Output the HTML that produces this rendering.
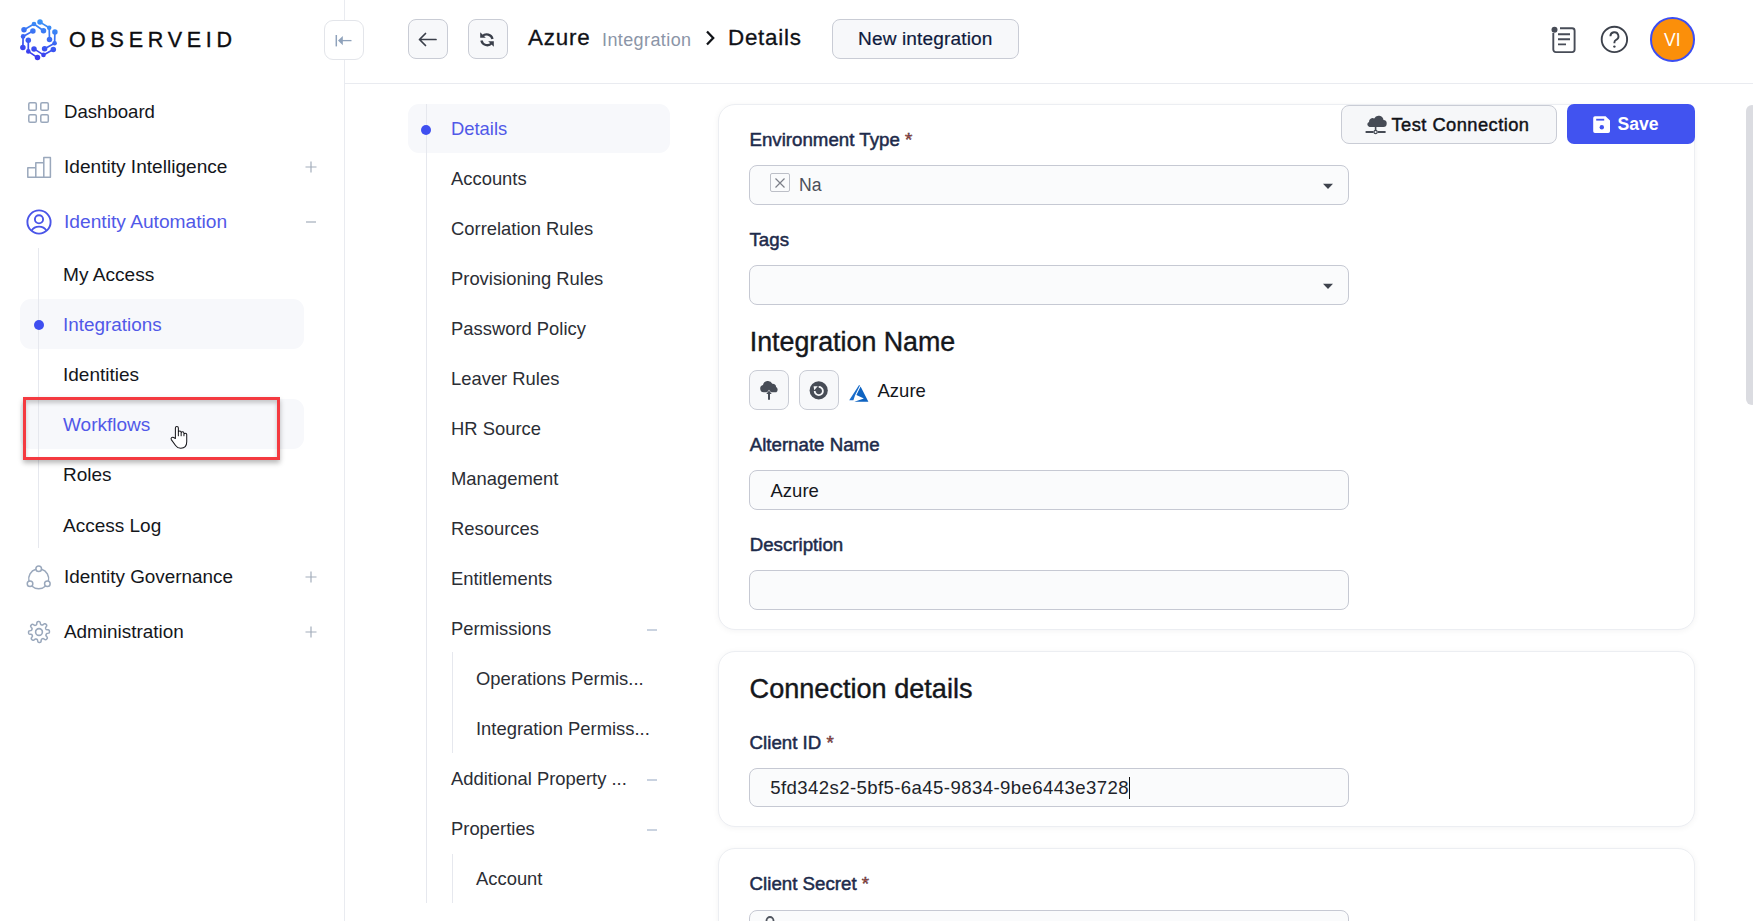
<!DOCTYPE html>
<html><head><meta charset="utf-8"><style>
html,body{margin:0;padding:0;width:1753px;height:921px;overflow:hidden;background:#fff;font-family:"Liberation Sans",sans-serif}
.t{position:absolute;white-space:nowrap}
.r{position:absolute;display:block}
</style></head><body>
<div class="r" style="left:344px;top:0px;width:1px;height:921px;background:#e9ebf0"></div>
<div class="r" style="left:344px;top:83px;width:1409px;height:1px;background:#e9ebf0"></div>
<svg class="r" style="left:18px;top:18px" width="42" height="44" viewBox="0 0 42 44"><defs><linearGradient id="lg" gradientUnits="userSpaceOnUse" x1="30" y1="2" x2="18" y2="42"><stop offset="0" stop-color="#3a9af7"/><stop offset="1" stop-color="#3b33ee"/></linearGradient></defs><g fill="url(#lg)" stroke="url(#lg)"><path d="M22.0 4.1 L31.2 9.8 L31.5 21.4" fill="none" stroke-width="1.7" stroke-linejoin="round"/><circle cx="22.0" cy="4.1" r="2.75" stroke="none"/><circle cx="31.2" cy="9.8" r="2.3" stroke="none"/><circle cx="31.5" cy="21.4" r="2.75" stroke="none"/><path d="M6.0 11.7 L16.0 6.0 L25.5 12.7" fill="none" stroke-width="1.7" stroke-linejoin="round"/><circle cx="6.0" cy="11.7" r="2.75" stroke="none"/><circle cx="16.0" cy="6.0" r="2.3" stroke="none"/><circle cx="25.5" cy="12.7" r="2.75" stroke="none"/><path d="M14.9 13.0 L5.1 18.4 L4.9 29.6" fill="none" stroke-width="1.7" stroke-linejoin="round"/><circle cx="14.9" cy="13.0" r="2.75" stroke="none"/><circle cx="5.1" cy="18.4" r="2.3" stroke="none"/><circle cx="4.9" cy="29.6" r="2.75" stroke="none"/><path d="M10.3 22.2 L10.3 33.4 L19.5 39.6" fill="none" stroke-width="1.7" stroke-linejoin="round"/><circle cx="10.3" cy="22.2" r="2.75" stroke="none"/><circle cx="10.3" cy="33.4" r="2.3" stroke="none"/><circle cx="19.5" cy="39.6" r="2.75" stroke="none"/><path d="M16.0 30.9 L25.5 36.9 L35.3 31.5" fill="none" stroke-width="1.7" stroke-linejoin="round"/><circle cx="16.0" cy="30.9" r="2.75" stroke="none"/><circle cx="25.5" cy="36.9" r="2.3" stroke="none"/><circle cx="35.3" cy="31.5" r="2.75" stroke="none"/><path d="M36.9 14.1 L36.6 25.2 L26.6 30.7" fill="none" stroke-width="1.7" stroke-linejoin="round"/><circle cx="36.9" cy="14.1" r="2.75" stroke="none"/><circle cx="36.6" cy="25.2" r="2.3" stroke="none"/><circle cx="26.6" cy="30.7" r="2.75" stroke="none"/></g></svg>
<div class="t " style="left:69px;top:26.75px;font-size:21.5px;line-height:27px;color:#0d0d0f;letter-spacing:4.75px;-webkit-text-stroke:0.35px #0d0d0f;">OBSERVEID</div>
<div class="r" style="left:324px;top:20px;width:40px;height:40px;box-sizing:border-box;border:1px solid #e3e5ea;border-radius:9px;background:#fff"></div>
<svg class="r" style="left:334px;top:33px" width="20" height="14" viewBox="0 0 20 14"><path d="M2.3 2v11.4" stroke="#8fa2bb" stroke-width="1.5"/><path d="M4 7.6L8.8 3v9.2z" fill="#8fa2bb"/><path d="M8 7.6h9.5" stroke="#8fa2bb" stroke-width="1.3"/></svg>
<svg class="r" style="left:26px;top:100px" width="26" height="26" viewBox="0 0 26 26"><rect x="2.8" y="2.8" width="7.5" height="7.5" rx="1.3" fill="none" stroke="#9aa8bc" stroke-width="1.5"/><rect x="14.8" y="2.8" width="7.5" height="7.5" rx="1.3" fill="none" stroke="#9aa8bc" stroke-width="1.5"/><rect x="2.8" y="14.8" width="7.5" height="7.5" rx="1.3" fill="none" stroke="#9aa8bc" stroke-width="1.5"/><rect x="14.8" y="14.8" width="7.5" height="7.5" rx="1.3" fill="none" stroke="#9aa8bc" stroke-width="1.5"/></svg>
<div class="t " style="left:64px;top:100.06px;font-size:18.6px;line-height:23px;color:#14161b;">Dashboard</div>
<svg class="r" style="left:26px;top:155px" width="26" height="24" viewBox="0 0 26 24"><path d="M1.8 22.2V12.8h8v9.4zM9.8 22.2V7.8h8v14.4zM17.8 22.2V2.5h6.6v19.7z" fill="none" stroke="#9aa8bc" stroke-width="1.5" stroke-linejoin="round"/></svg>
<div class="t " style="left:64px;top:155.38px;font-size:19.1px;line-height:24px;color:#14161b;">Identity Intelligence</div>
<svg class="r" style="left:304px;top:159.5px" width="14" height="14" viewBox="0 0 14 14"><path d="M7 1.5v11M1.5 7h11" stroke="#a3adbb" stroke-width="1.2"/></svg>
<svg class="r" style="left:25px;top:208px" width="28" height="28" viewBox="0 0 28 28"><circle cx="14" cy="14" r="11.6" fill="none" stroke="#4a55e8" stroke-width="1.9"/><circle cx="14" cy="11.3" r="4.1" fill="none" stroke="#4a55e8" stroke-width="1.9"/><path d="M6.6 22.6c1.6-2.8 4.4-4 7.4-4s5.8 1.2 7.4 4" fill="none" stroke="#4a55e8" stroke-width="1.9"/></svg>
<div class="t " style="left:64px;top:209.55px;font-size:19.2px;line-height:24px;color:#5159e8;">Identity Automation</div>
<svg class="r" style="left:305px;top:218.5px" width="12" height="6" viewBox="0 0 12 6"><path d="M1 3h10" stroke="#a3adbb" stroke-width="1.2"/></svg>
<div class="r" style="left:38px;top:248px;width:1px;height:300px;background:#e6e8ee"></div>
<div class="t " style="left:63px;top:263.18px;font-size:19.1px;line-height:24px;color:#14161b;">My Access</div>
<div class="r" style="left:20px;top:299px;width:284px;height:50px;background:#f7f8fb;border-radius:11px"></div>
<div class="r" style="left:38px;top:248px;width:1px;height:300px;background:#e6e8ee"></div>
<div class="r" style="left:33.7px;top:320px;width:10px;height:10px;background:#3f4ff0;border-radius:50%"></div>
<div class="t " style="left:63px;top:313.45px;font-size:18.9px;line-height:24px;color:#5159e8;">Integrations</div>
<div class="t " style="left:63px;top:363.22px;font-size:19px;line-height:24px;color:#14161b;">Identities</div>
<div class="r" style="left:20px;top:399px;width:284px;height:50px;background:#f7f8fb;border-radius:11px"></div>
<div class="r" style="left:38px;top:399px;width:1px;height:50px;background:#e6e8ee"></div>
<div class="t " style="left:63px;top:413.32px;font-size:19px;line-height:24px;color:#5159e8;">Workflows</div>
<div class="t " style="left:63px;top:463.32px;font-size:19px;line-height:24px;color:#14161b;">Roles</div>
<div class="t " style="left:63px;top:513.62px;font-size:19px;line-height:24px;color:#14161b;">Access Log</div>
<svg class="r" style="left:24px;top:565px" width="30" height="28" viewBox="0 0 30 28"><circle cx="14.70" cy="3.80" r="2.8" fill="none" stroke="#9aa8bc" stroke-width="1.5"/><circle cx="6.04" cy="18.80" r="2.8" fill="none" stroke="#9aa8bc" stroke-width="1.5"/><circle cx="23.36" cy="18.80" r="2.8" fill="none" stroke="#9aa8bc" stroke-width="1.5"/><path d="M17.47 4.19A10 10 0 0 1 24.41 16.20M21.63 21.00A10 10 0 0 1 7.77 21.00M4.99 16.20A10 10 0 0 1 11.93 4.19" fill="none" stroke="#9aa8bc" stroke-width="1.5"/></svg>
<div class="t " style="left:64px;top:564.75px;font-size:18.9px;line-height:24px;color:#14161b;">Identity Governance</div>
<svg class="r" style="left:304px;top:570px" width="14" height="14" viewBox="0 0 14 14"><path d="M7 1.5v11M1.5 7h11" stroke="#a3adbb" stroke-width="1.2"/></svg>
<svg class="r" style="left:27px;top:618px" width="24" height="28" viewBox="0 0 24 28"><path d="M22.44 14.00 L22.38 14.41 L22.18 14.80 L21.64 15.14 L20.64 15.37 L19.83 15.56 L19.46 15.79 L19.30 16.06 L19.18 16.33 L19.08 16.61 L18.99 16.89 L18.92 17.19 L18.94 17.53 L19.24 18.05 L19.89 18.84 L20.33 19.57 L20.35 20.07 L20.18 20.45 L19.94 20.78 L19.67 21.09 L19.38 21.38 L19.05 21.63 L18.63 21.77 L18.01 21.62 L17.14 21.08 L16.43 20.63 L16.01 20.54 L15.70 20.62 L15.43 20.73 L15.16 20.86 L14.89 20.99 L14.64 21.14 L14.41 21.40 L14.25 21.99 L14.16 23.00 L13.95 23.83 L13.62 24.20 L13.22 24.35 L12.82 24.41 L12.41 24.44 L12.00 24.44 L11.59 24.38 L11.20 24.18 L10.86 23.64 L10.63 22.64 L10.44 21.83 L10.21 21.46 L9.94 21.30 L9.67 21.18 L9.39 21.08 L9.11 20.99 L8.81 20.92 L8.47 20.94 L7.95 21.24 L7.16 21.89 L6.43 22.33 L5.93 22.35 L5.55 22.18 L5.22 21.94 L4.91 21.67 L4.62 21.38 L4.37 21.05 L4.23 20.63 L4.38 20.01 L4.92 19.14 L5.37 18.43 L5.46 18.01 L5.38 17.70 L5.27 17.43 L5.14 17.16 L5.01 16.89 L4.86 16.64 L4.60 16.41 L4.01 16.25 L3.00 16.16 L2.17 15.95 L1.80 15.62 L1.65 15.22 L1.59 14.82 L1.56 14.41 L1.56 14.00 L1.62 13.59 L1.82 13.20 L2.36 12.86 L3.36 12.63 L4.17 12.44 L4.54 12.21 L4.70 11.94 L4.82 11.67 L4.92 11.39 L5.01 11.11 L5.08 10.81 L5.06 10.47 L4.76 9.95 L4.11 9.16 L3.67 8.43 L3.65 7.93 L3.82 7.55 L4.06 7.22 L4.33 6.91 L4.62 6.62 L4.95 6.37 L5.37 6.23 L5.99 6.38 L6.86 6.92 L7.57 7.37 L7.99 7.46 L8.30 7.38 L8.57 7.27 L8.84 7.14 L9.11 7.01 L9.36 6.86 L9.59 6.60 L9.75 6.01 L9.84 5.00 L10.05 4.17 L10.38 3.80 L10.78 3.65 L11.18 3.59 L11.59 3.56 L12.00 3.56 L12.41 3.62 L12.80 3.82 L13.14 4.36 L13.37 5.36 L13.56 6.17 L13.79 6.54 L14.06 6.70 L14.33 6.82 L14.61 6.92 L14.89 7.01 L15.19 7.08 L15.53 7.06 L16.05 6.76 L16.84 6.11 L17.57 5.67 L18.07 5.65 L18.45 5.82 L18.78 6.06 L19.09 6.33 L19.38 6.62 L19.63 6.95 L19.77 7.37 L19.62 7.99 L19.08 8.86 L18.63 9.57 L18.54 9.99 L18.62 10.30 L18.73 10.57 L18.86 10.84 L18.99 11.11 L19.14 11.36 L19.40 11.59 L19.99 11.75 L21.00 11.84 L21.83 12.05 L22.20 12.38 L22.35 12.78 L22.41 13.18 L22.44 13.59z" fill="none" stroke="#9aa8bc" stroke-width="1.5" stroke-linejoin="round"/><circle cx="12" cy="14" r="3.4" fill="none" stroke="#9aa8bc" stroke-width="1.6"/></svg>
<div class="t " style="left:64px;top:620.45px;font-size:18.9px;line-height:24px;color:#14161b;">Administration</div>
<svg class="r" style="left:304px;top:625px" width="14" height="14" viewBox="0 0 14 14"><path d="M7 1.5v11M1.5 7h11" stroke="#a3adbb" stroke-width="1.2"/></svg>
<div class="r" style="left:23px;top:397px;width:257px;height:63px;box-sizing:border-box;border:3px solid #f43a40;box-shadow:0 3px 5px rgba(0,0,0,.28), inset 0 3px 4px rgba(0,0,0,.2)"></div>
<svg class="r" style="left:167px;top:424px" width="22" height="28" viewBox="0 0 22 28"><g transform="translate(9.5 2) scale(0.93) translate(-9.5 -2)"><path d="M8.3 15.5V4.2a1.6 1.6 0 0 1 3.2 0v8.3V8.8a1.5 1.5 0 0 1 3 0v3.6V9.8a1.5 1.5 0 0 1 3 0v2.8v-1.4a1.5 1.5 0 0 1 3 0V19c0 4.5-2.7 6.9-6.4 6.9-2.6 0-4.2-1-5.6-3l-4.6-6.3a1.7 1.7 0 0 1 2.5-2.2z" fill="#fff" stroke="#15151a" stroke-width="1.1" stroke-linejoin="round"/></g></svg>
<div class="r" style="left:408px;top:19px;width:40px;height:40px;box-sizing:border-box;border:1px solid #c9ccd5;border-radius:8px;background:#f7f8fa"></div>
<svg class="r" style="left:416px;top:29px" width="24" height="22" viewBox="0 0 24 22"><path d="M20 10.5H3.5M9.5 4.5L3.5 10.5l6 6" fill="none" stroke="#3a3f4a" stroke-width="1.7" stroke-linecap="round" stroke-linejoin="round"/></svg>
<div class="r" style="left:468px;top:19px;width:40px;height:40px;box-sizing:border-box;border:1px solid #c9ccd5;border-radius:8px;background:#f7f8fa"></div>
<svg class="r" style="left:479px;top:31px" width="16" height="17" viewBox="0 0 16 17"><path d="M3.4 5.2A6 6 0 0 1 13.5 8" fill="none" stroke="#3a3f4a" stroke-width="2.3"/><path d="M1.2 1.2v5.6h5.6z" fill="#3a3f4a"/><path d="M12.6 12.3A6 6 0 0 1 2.4 9.6" fill="none" stroke="#3a3f4a" stroke-width="2.3"/><path d="M14.8 15.8v-5.6H9.2z" fill="#3a3f4a"/></svg>
<div class="t " style="left:528px;top:24.04px;font-size:22.4px;line-height:28px;color:#101217;letter-spacing:0.8px;-webkit-text-stroke:0.3px #101217;">Azure</div>
<div class="t " style="left:602px;top:28.96px;font-size:18.0px;line-height:22px;color:#8b95a7;letter-spacing:0.4px;">Integration</div>
<svg class="r" style="left:703px;top:28px" width="14" height="20" viewBox="0 0 14 20"><path d="M4 3.5l6.2 6.5L4 16.5" fill="none" stroke="#111318" stroke-width="2.3" stroke-linejoin="miter"/></svg>
<div class="t " style="left:728px;top:24.04px;font-size:22.4px;line-height:28px;color:#101217;letter-spacing:0.75px;-webkit-text-stroke:0.3px #101217;">Details</div>
<div class="r" style="left:832px;top:19px;width:187px;height:40px;box-sizing:border-box;border:1px solid #c9ccd5;border-radius:8px;background:#f7f8fa"></div>
<div class="t " style="left:858px;top:27.28px;font-size:19.1px;line-height:24px;color:#0f1b3d;letter-spacing:0.12px;-webkit-text-stroke:0.2px #0f1b3d;">New integration</div>
<svg class="r" style="left:1548px;top:24px" width="30" height="32" viewBox="0 0 30 32"><rect x="5.3" y="4.3" width="21.3" height="23.8" rx="2.5" fill="none" stroke="#474c57" stroke-width="1.9"/><rect x="2" y="2" width="10" height="7" fill="#fff"/><circle cx="6.5" cy="5.8" r="3" fill="#474c57"/><path d="M10 10.2h12M10 15.3h12M10 20.4h8" stroke="#474c57" stroke-width="1.9"/></svg>
<svg class="r" style="left:1600px;top:25px" width="29" height="29" viewBox="0 0 29 29"><circle cx="14.4" cy="14.4" r="12.7" fill="none" stroke="#3d424c" stroke-width="1.9"/><path d="M10.4 11.2a4 4 0 1 1 5.8 3.6c-1 .6-1.8 1.3-1.8 2.6v.8" fill="none" stroke="#3d424c" stroke-width="1.9"/><circle cx="14.4" cy="21.6" r="1.2" fill="#3d424c"/></svg>
<div class="r" style="left:1650px;top:17.3px;width:44.6px;height:44.6px;box-sizing:border-box;border:2px solid #3c4ef2;border-radius:50%;background:#fb8f0a"></div>
<div class="t " style="left:1664px;top:28.54px;font-size:17.5px;line-height:22px;color:#ffffff;">VI</div>
<div class="r" style="left:408px;top:104px;width:261.5px;height:49px;background:#f7f8fb;border-radius:11px"></div>
<div class="r" style="left:426px;top:104px;width:1px;height:799px;background:#e6e8ee"></div>
<div class="r" style="left:421.4px;top:124.7px;width:10px;height:10px;background:#3f4ff0;border-radius:50%"></div>
<div class="t " style="left:451px;top:116.72px;font-size:18.4px;line-height:23px;color:#5159e8;">Details</div>
<div class="t " style="left:451px;top:166.72px;font-size:18.4px;line-height:23px;color:#2b2e35;">Accounts</div>
<div class="t " style="left:451px;top:216.72px;font-size:18.4px;line-height:23px;color:#2b2e35;">Correlation Rules</div>
<div class="t " style="left:451px;top:266.72px;font-size:18.4px;line-height:23px;color:#2b2e35;">Provisioning Rules</div>
<div class="t " style="left:451px;top:316.72px;font-size:18.4px;line-height:23px;color:#2b2e35;">Password Policy</div>
<div class="t " style="left:451px;top:366.72px;font-size:18.4px;line-height:23px;color:#2b2e35;">Leaver Rules</div>
<div class="t " style="left:451px;top:416.72px;font-size:18.4px;line-height:23px;color:#2b2e35;">HR Source</div>
<div class="t " style="left:451px;top:466.72px;font-size:18.4px;line-height:23px;color:#2b2e35;">Management</div>
<div class="t " style="left:451px;top:516.72px;font-size:18.4px;line-height:23px;color:#2b2e35;">Resources</div>
<div class="t " style="left:451px;top:566.72px;font-size:18.4px;line-height:23px;color:#2b2e35;">Entitlements</div>
<div class="t " style="left:451px;top:616.72px;font-size:18.4px;line-height:23px;color:#2b2e35;">Permissions</div>
<div class="t " style="left:476px;top:666.72px;font-size:18.4px;line-height:23px;color:#2b2e35;">Operations Permis...</div>
<div class="t " style="left:476px;top:716.72px;font-size:18.4px;line-height:23px;color:#2b2e35;">Integration Permiss...</div>
<div class="t " style="left:451px;top:766.72px;font-size:18.4px;line-height:23px;color:#2b2e35;">Additional Property ...</div>
<div class="t " style="left:451px;top:816.72px;font-size:18.4px;line-height:23px;color:#2b2e35;">Properties</div>
<div class="t " style="left:476px;top:866.72px;font-size:18.4px;line-height:23px;color:#2b2e35;">Account</div>
<div class="r" style="left:452px;top:652px;width:1px;height:101px;background:#e6e8ee"></div>
<div class="r" style="left:452px;top:854px;width:1px;height:49px;background:#e6e8ee"></div>
<svg class="r" style="left:646px;top:626.5px" width="12" height="6" viewBox="0 0 12 6"><path d="M1 3h10" stroke="#a6b5cc" stroke-width="1.2"/></svg>
<svg class="r" style="left:646px;top:776.5px" width="12" height="6" viewBox="0 0 12 6"><path d="M1 3h10" stroke="#a6b5cc" stroke-width="1.2"/></svg>
<svg class="r" style="left:646px;top:826.5px" width="12" height="6" viewBox="0 0 12 6"><path d="M1 3h10" stroke="#a6b5cc" stroke-width="1.2"/></svg>
<div class="r" style="left:718px;top:104px;width:976.5px;height:526px;box-sizing:border-box;border:1px solid #eceef2;border-radius:17px;background:#fff;box-shadow:0 1px 6px rgba(16,24,40,.05)"></div>
<div class="r" style="left:718px;top:651px;width:976.5px;height:175.5px;box-sizing:border-box;border:1px solid #eceef2;border-radius:17px;background:#fff;box-shadow:0 1px 6px rgba(16,24,40,.05)"></div>
<div class="r" style="left:718px;top:848px;width:976.5px;height:200px;box-sizing:border-box;border:1px solid #eceef2;border-radius:17px;background:#fff;box-shadow:0 1px 6px rgba(16,24,40,.05)"></div>
<div class="r" style="left:1340.5px;top:104.5px;width:216px;height:39px;box-sizing:border-box;border:1px solid #c9ccd5;border-radius:8px;background:#f6f7f9"></div>
<svg class="r" style="left:1363px;top:114px" width="26" height="22" viewBox="0 0 26 22"><path d="M6.5 12.9h13.6a3.4 3.4 0 0 0 .4-6.8 4.9 4.9 0 0 0-9.3-1.6A3.6 3.6 0 0 0 6 7.9a2.6 2.6 0 0 0 .5 5z" fill="#464b55"/><path d="M12.6 12.6v4.4" stroke="#464b55" stroke-width="1.6"/><path d="M2.6 18h8M14.6 18h8" stroke="#464b55" stroke-width="2"/><circle cx="12.6" cy="18" r="1.6" fill="none" stroke="#464b55" stroke-width="1.2"/></svg>
<div class="t " style="left:1391.5px;top:112.66px;font-size:18.3px;line-height:23px;color:#111318;letter-spacing:0.46px;-webkit-text-stroke:0.45px #111318;">Test Connection</div>
<div class="r" style="left:1567px;top:104px;width:128px;height:39.5px;background:#4153f0;border-radius:7px"></div>
<svg class="r" style="left:1592px;top:115px" width="20" height="20" viewBox="0 0 20 20"><path d="M3 1.2h10.6l4.4 4.4v10.6a1.8 1.8 0 0 1-1.8 1.8H3a1.8 1.8 0 0 1-1.8-1.8V3A1.8 1.8 0 0 1 3 1.2z" fill="#fff"/><rect x="4.2" y="3.8" width="8" height="1.8" fill="#4153f0"/><circle cx="9.8" cy="12.2" r="2.2" fill="#4153f0"/></svg>
<div class="t " style="left:1617.5px;top:113.00px;font-size:17.6px;line-height:22px;color:#ffffff;font-weight:700;">Save</div>
<div class="t " style="left:749.5px;top:128.02px;font-size:18.7px;line-height:23px;color:#1e2b4b;-webkit-text-stroke:0.5px #1e2b4b;">Environment Type <span style="color:#f0572a">*</span></div>
<div class="r" style="left:749px;top:165px;width:600px;height:40px;box-sizing:border-box;border:1px solid #c6c9d3;border-radius:8px;background:#fafbfc"></div>
<div class="r" style="left:770px;top:172.5px;width:20px;height:19.5px;box-sizing:border-box;border:1.5px solid #bcbfc7;border-radius:2px;background:#fafbfc"></div>
<svg class="r" style="left:772px;top:175px" width="16" height="16" viewBox="0 0 16 16"><path d="M3.5 3.5l9 9M12.5 3.5l-9 9" stroke="#7b7f88" stroke-width="1.2"/></svg>
<div class="t " style="left:799px;top:174.00px;font-size:17.6px;line-height:22px;color:#4a4f59;">Na</div>
<svg class="r" style="left:1321px;top:182px" width="14" height="9" viewBox="0 0 14 9"><path d="M2 1.8h10L7 7z" fill="#3e434d"/></svg>
<div class="t " style="left:749.5px;top:228.32px;font-size:18.7px;line-height:23px;color:#1e2b4b;-webkit-text-stroke:0.5px #1e2b4b;">Tags</div>
<div class="r" style="left:749px;top:265px;width:600px;height:40px;box-sizing:border-box;border:1px solid #c6c9d3;border-radius:8px;background:#fafbfc"></div>
<svg class="r" style="left:1321px;top:282px" width="14" height="9" viewBox="0 0 14 9"><path d="M2 1.8h10L7 7z" fill="#3e434d"/></svg>
<div class="t " style="left:749.7px;top:325.01px;font-size:26.8px;line-height:34px;color:#15171c;-webkit-text-stroke:0.4px #15171c;">Integration Name</div>
<div class="r" style="left:749px;top:370px;width:40px;height:40px;box-sizing:border-box;border:1px solid #c9ccd5;border-radius:8px;background:#f7f8fa"></div>
<svg class="r" style="left:758px;top:379.5px" width="22" height="22" viewBox="0 0 22 22"><path d="M5.6 12.2a3.6 3.6 0 0 1-.6-7.1 4.9 4.9 0 0 1 9.3-1.3 3.3 3.3 0 0 1 3.8 3.2 3.1 3.1 0 0 1 .2 5.2z" fill="#474c56"/><path d="M7.2 14.8L11 9.8l3.8 5z" fill="#f7f8fa"/><path d="M8.3 13.9L11 10.4l2.7 3.5z" fill="#474c56"/><path d="M11 13.5v5.6" stroke="#474c56" stroke-width="2" stroke-linecap="round"/></svg>
<div class="r" style="left:799px;top:370px;width:40px;height:40px;box-sizing:border-box;border:1px solid #c9ccd5;border-radius:8px;background:#f7f8fa"></div>
<svg class="r" style="left:809px;top:381px" width="20" height="20" viewBox="0 0 20 20"><circle cx="9.7" cy="9.4" r="9.1" fill="#474c56"/><path d="M5.7 10A4.1 4.1 0 1 0 9.7 5.9" fill="none" stroke="#f7f8fa" stroke-width="1.8"/><path d="M4.6 5.3h4.2l-3.6 3.9z" fill="#f7f8fa"/></svg>
<svg class="r" style="left:848px;top:384px" width="22" height="20" viewBox="0 0 22 20"><path d="M1.2 16.3L10.9 1.3h1.2L7 11.6 5.4 16.3z" fill="#1a6dcb"/><path d="M12.6 2.6l7.8 15.2H6.3l9.6-3.2-7.5-3.6z" fill="#0e63c1"/></svg>
<div class="t " style="left:877.5px;top:378.79px;font-size:18.5px;line-height:23px;color:#14161b;">Azure</div>
<div class="t " style="left:749.7px;top:433.32px;font-size:18.7px;line-height:23px;color:#1e2b4b;-webkit-text-stroke:0.5px #1e2b4b;">Alternate Name</div>
<div class="r" style="left:749px;top:470px;width:600px;height:40px;box-sizing:border-box;border:1px solid #c6c9d3;border-radius:8px;background:#fafbfc"></div>
<div class="t " style="left:770.5px;top:478.59px;font-size:18.5px;line-height:23px;color:#15171c;">Azure</div>
<div class="t " style="left:749.7px;top:533.02px;font-size:18.7px;line-height:23px;color:#1e2b4b;-webkit-text-stroke:0.5px #1e2b4b;">Description</div>
<div class="r" style="left:749px;top:570px;width:600px;height:40px;box-sizing:border-box;border:1px solid #c6c9d3;border-radius:8px;background:#fafbfc"></div>
<div class="t " style="left:749.6px;top:671.61px;font-size:27.1px;line-height:34px;color:#15171c;-webkit-text-stroke:0.4px #15171c;">Connection details</div>
<div class="t " style="left:749.6px;top:730.52px;font-size:18.7px;line-height:23px;color:#1e2b4b;-webkit-text-stroke:0.5px #1e2b4b;">Client ID <span style="color:#f0572a">*</span></div>
<div class="r" style="left:749px;top:767.5px;width:600px;height:39px;box-sizing:border-box;border:1px solid #c6c9d3;border-radius:8px;background:#fafbfc"></div>
<div class="t " style="left:770.2px;top:776.36px;font-size:18.6px;line-height:23px;color:#202329;letter-spacing:0.4px;">5fd342s2-5bf5-6a45-9834-9be6443e3728</div>
<div class="r" style="left:1129px;top:777px;width:1px;height:22px;background:#111"></div>
<div class="t " style="left:749.6px;top:871.82px;font-size:18.7px;line-height:23px;color:#1e2b4b;-webkit-text-stroke:0.5px #1e2b4b;">Client Secret <span style="color:#f0572a">*</span></div>
<div class="r" style="left:749px;top:909.5px;width:600px;height:40px;box-sizing:border-box;border:1px solid #c6c9d3;border-radius:8px;background:#fafbfc"></div>
<svg class="r" style="left:764px;top:916px" width="12" height="6" viewBox="0 0 12 6"><path d="M2.5 6V4.5a3.5 3.5 0 0 1 7 0V6" fill="none" stroke="#50555f" stroke-width="1.8"/></svg>
<div class="r" style="left:1746px;top:105px;width:12px;height:300px;background:#dbdce1;border-radius:6px"></div>
</body></html>
